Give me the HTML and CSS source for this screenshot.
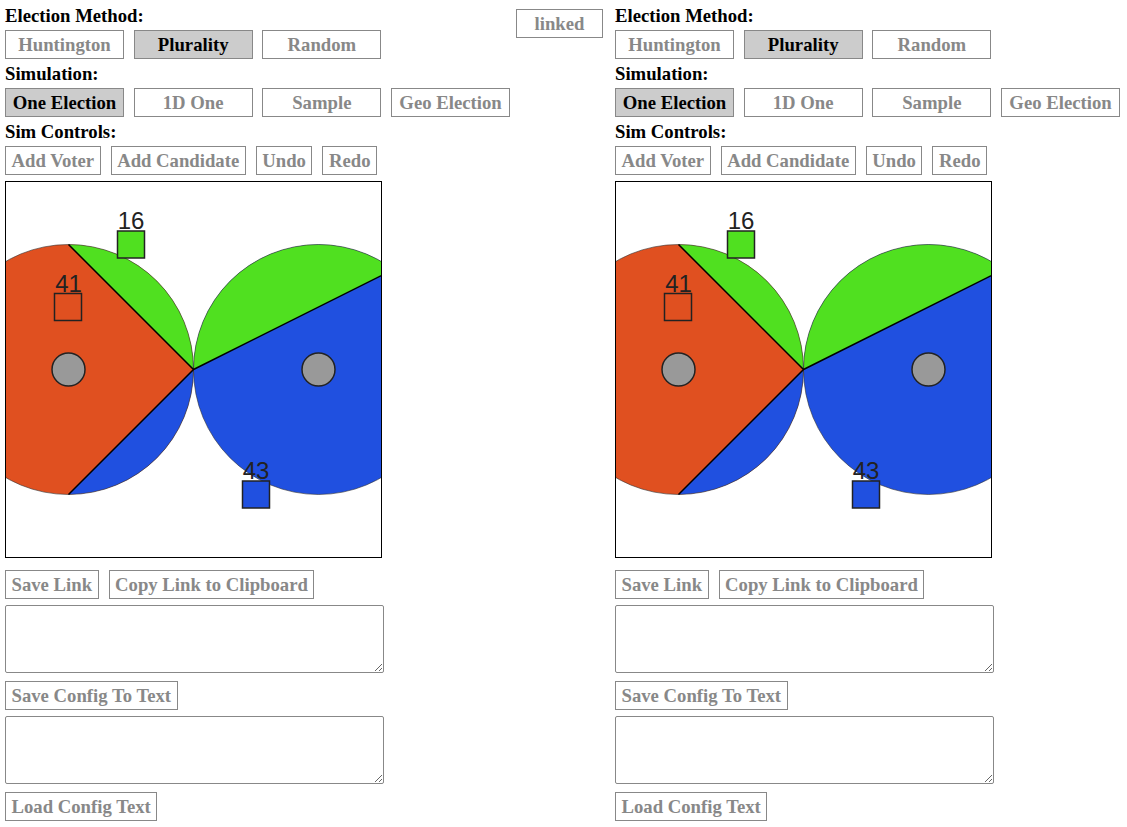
FILE: index.html
```html
<!DOCTYPE html>
<html>
<head>
<meta charset="utf-8">
<link rel="stylesheet" href="styles.css">
</head>
<body>
<div class="page">
  <div class="panel">
    <div class="label first">Election Method:</div>
    <div class="row fixed">
      <button class="btn w">Huntington</button>
      <button class="btn w on">Plurality</button>
      <button class="btn w">Random</button>
    </div>
    <div class="label">Simulation:</div>
    <div class="row fixed">
      <button class="btn w on">One Election</button>
      <button class="btn w">1D One</button>
      <button class="btn w">Sample</button>
      <button class="btn w">Geo Election</button>
    </div>
    <div class="label">Sim Controls:</div>
    <div class="row">
      <button class="btn">Add Voter</button>
      <button class="btn">Add Candidate</button>
      <button class="btn">Undo</button>
      <button class="btn">Redo</button>
    </div>
    <div class="board">
      <svg width="375" height="375" viewBox="0 0 375 375">
        <defs>
          <clipPath id="cl1"><circle cx="62.5" cy="187.5" r="125"/></clipPath>
          <clipPath id="cr1"><circle cx="312.5" cy="187.5" r="125"/></clipPath>
        </defs>
        <circle cx="62.5" cy="187.5" r="125" fill="#e05020"/>
        <g clip-path="url(#cl1)">
          <polygon points="0,0 375,375 375,0" fill="#50e020"/>
          <polygon points="375,0 0,375 375,375" fill="#2050e0"/>
        </g>
        <circle cx="312.5" cy="187.5" r="125" fill="#2050e0"/>
        <g clip-path="url(#cr1)">
          <polygon points="187.5,187.5 450,56.25 450,-10 187.5,-10" fill="#50e020"/>
        </g>
        <circle cx="62.5" cy="187.5" r="125" fill="none" stroke="#333" stroke-width="0.6"/>
        <circle cx="312.5" cy="187.5" r="125" fill="none" stroke="#333" stroke-width="0.6"/>
        <path d="M62.5 62.5 L187.5 187.5 L62.5 312.5 M187.5 187.5 L400 81.25" fill="none" stroke="#000" stroke-width="1.5"/>
        <circle cx="62.5" cy="187.5" r="16.5" fill="#999" stroke="#222" stroke-width="1.5"/>
        <circle cx="312.5" cy="187.5" r="16.5" fill="#999" stroke="#222" stroke-width="1.5"/>
        <rect x="111.5" y="49" width="27" height="27" fill="#50e020" stroke="#222" stroke-width="1.5"/>
        <rect x="48.5" y="111.5" width="27" height="27" fill="#e05020" stroke="#222" stroke-width="1.5"/>
        <rect x="236.5" y="299" width="27" height="27" fill="#2050e0" stroke="#222" stroke-width="1.5"/>
        <text class="num" x="125" y="47" text-anchor="middle">16</text>
        <text class="num" x="62.5" y="109.5" text-anchor="middle">41</text>
        <text class="num" x="250" y="296.5" text-anchor="middle">43</text>
      </svg>
    </div>
    <div class="row after">
      <button class="btn">Save Link</button>
      <button class="btn">Copy Link to Clipboard</button>
    </div>
    <textarea class="box"></textarea>
    <div class="row gapped"><button class="btn">Save Config To Text</button></div>
    <textarea class="box"></textarea>
    <div class="row gapped"><button class="btn">Load Config Text</button></div>
  </div>

  <button class="btn link">linked</button>

  <div class="panel">
    <div class="label first">Election Method:</div>
    <div class="row fixed">
      <button class="btn w">Huntington</button>
      <button class="btn w on">Plurality</button>
      <button class="btn w">Random</button>
    </div>
    <div class="label">Simulation:</div>
    <div class="row fixed">
      <button class="btn w on">One Election</button>
      <button class="btn w">1D One</button>
      <button class="btn w">Sample</button>
      <button class="btn w">Geo Election</button>
    </div>
    <div class="label">Sim Controls:</div>
    <div class="row">
      <button class="btn">Add Voter</button>
      <button class="btn">Add Candidate</button>
      <button class="btn">Undo</button>
      <button class="btn">Redo</button>
    </div>
    <div class="board">
      <svg width="375" height="375" viewBox="0 0 375 375">
        <defs>
          <clipPath id="cl2"><circle cx="62.5" cy="187.5" r="125"/></clipPath>
          <clipPath id="cr2"><circle cx="312.5" cy="187.5" r="125"/></clipPath>
        </defs>
        <circle cx="62.5" cy="187.5" r="125" fill="#e05020"/>
        <g clip-path="url(#cl2)">
          <polygon points="0,0 375,375 375,0" fill="#50e020"/>
          <polygon points="375,0 0,375 375,375" fill="#2050e0"/>
        </g>
        <circle cx="312.5" cy="187.5" r="125" fill="#2050e0"/>
        <g clip-path="url(#cr2)">
          <polygon points="187.5,187.5 450,56.25 450,-10 187.5,-10" fill="#50e020"/>
        </g>
        <circle cx="62.5" cy="187.5" r="125" fill="none" stroke="#333" stroke-width="0.6"/>
        <circle cx="312.5" cy="187.5" r="125" fill="none" stroke="#333" stroke-width="0.6"/>
        <path d="M62.5 62.5 L187.5 187.5 L62.5 312.5 M187.5 187.5 L400 81.25" fill="none" stroke="#000" stroke-width="1.5"/>
        <circle cx="62.5" cy="187.5" r="16.5" fill="#999" stroke="#222" stroke-width="1.5"/>
        <circle cx="312.5" cy="187.5" r="16.5" fill="#999" stroke="#222" stroke-width="1.5"/>
        <rect x="111.5" y="49" width="27" height="27" fill="#50e020" stroke="#222" stroke-width="1.5"/>
        <rect x="48.5" y="111.5" width="27" height="27" fill="#e05020" stroke="#222" stroke-width="1.5"/>
        <rect x="236.5" y="299" width="27" height="27" fill="#2050e0" stroke="#222" stroke-width="1.5"/>
        <text class="num" x="125" y="47" text-anchor="middle">16</text>
        <text class="num" x="62.5" y="109.5" text-anchor="middle">41</text>
        <text class="num" x="250" y="296.5" text-anchor="middle">43</text>
      </svg>
    </div>
    <div class="row after">
      <button class="btn">Save Link</button>
      <button class="btn">Copy Link to Clipboard</button>
    </div>
    <textarea class="box"></textarea>
    <div class="row gapped"><button class="btn">Save Config To Text</button></div>
    <textarea class="box"></textarea>
    <div class="row gapped"><button class="btn">Load Config Text</button></div>
  </div>
</div>
</body>
</html>
```

FILE: styles.css
```css
html, body {
  margin: 0;
  padding: 0;
  background: #fff;
}
body {
  font-family: "Liberation Serif", "Times New Roman", serif;
  color: #000;
}
.page {
  display: flex;
  align-items: flex-start;
  padding-left: 5px;
}
.panel {
  width: 511px;
  flex: none;
}
.label {
  font-weight: bold;
  font-size: 18.72px;
  line-height: 20px;
  height: 20px;
  margin-top: 5px;
  white-space: nowrap;
}
.label.first {
  margin-top: 6px;
}
.row {
  display: flex;
  gap: 10px;
  margin-top: 4px;
}
.row.fixed {
  gap: 9.68px;
}
.btn {
  box-sizing: border-box;
  height: 29px;
  margin: 0;
  padding: 0 5.5px;
  border: 1px solid #888;
  border-radius: 0;
  background: #fff;
  color: #888;
  font-family: "Liberation Serif", "Times New Roman", serif;
  font-weight: bold;
  font-size: 18.72px;
  line-height: 21px;
  white-space: nowrap;
  flex: none;
}
.btn.w {
  width: 119px;
}
.btn.on {
  background: #ccc;
  color: #000;
}
.btn.link {
  width: 87px;
  margin-top: 9px;
  margin-right: 12px;
}
.board {
  width: 375px;
  height: 375px;
  border: 1px solid #000;
  margin-top: 6px;
}
.board svg {
  display: block;
}
.num {
  font-family: "Liberation Sans", Arial, sans-serif;
  font-size: 24px;
  fill: #222;
}
.row.after {
  margin-top: 12px;
}
.row.gapped {
  margin-top: 8px;
}
.box {
  display: block;
  box-sizing: border-box;
  width: 379px;
  height: 68px;
  margin: 6px 0 0 0;
  border: 1px solid #888;
  border-radius: 2px;
  resize: both;
}
```
